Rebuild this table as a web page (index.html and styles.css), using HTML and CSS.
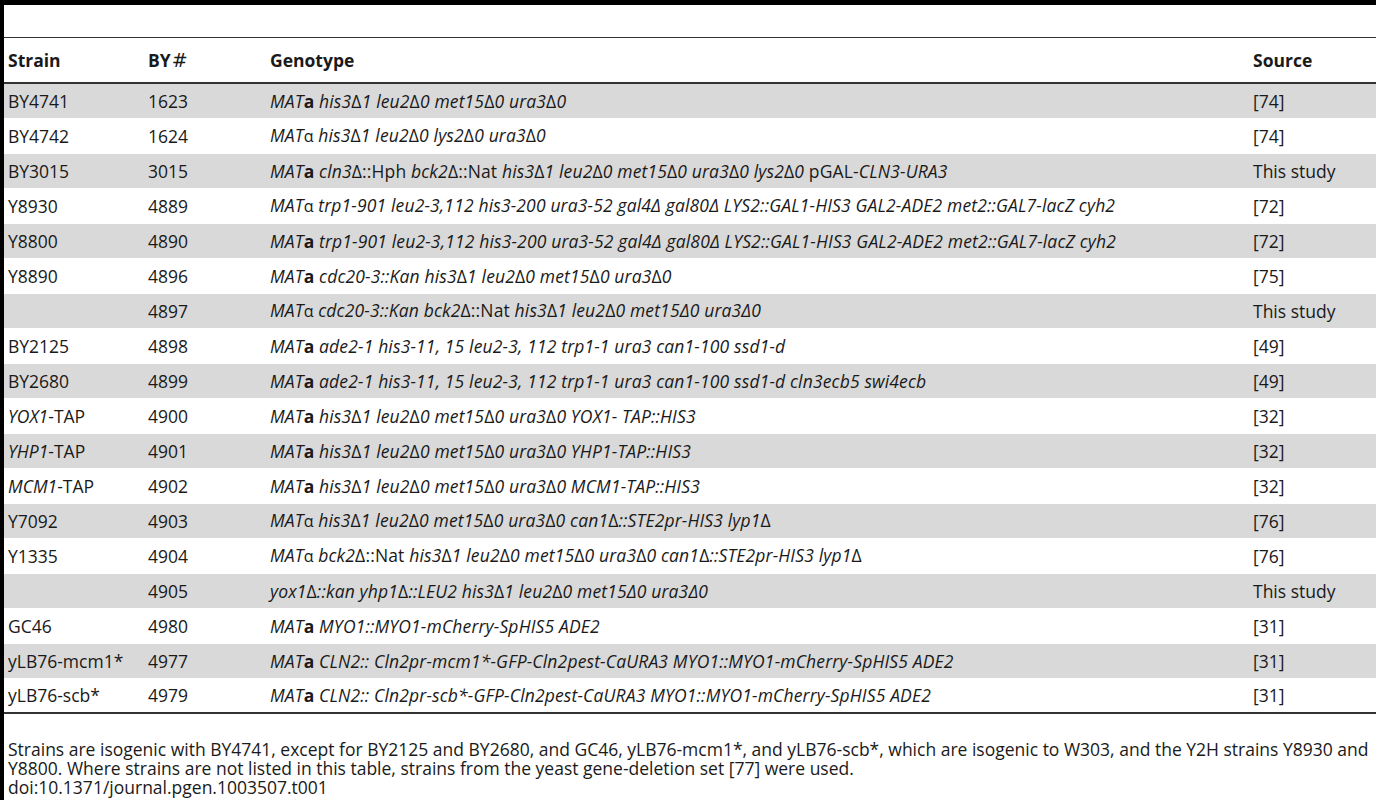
FILE: index.html
```html
<!DOCTYPE html>
<html lang="en">
<head>
<meta charset="utf-8">
<title>Strains</title>
<link rel="stylesheet" href="styles.css">
</head>
<body>
<div class="page">
  <div class="topbar"></div>
  <div class="gap"></div>
  <table class="strains">
    <colgroup>
      <col class="c-strain"><col class="c-by"><col class="c-geno"><col class="c-src">
    </colgroup>
    <thead>
      <tr><th>Strain</th><th>BY<span class="hash">#</span></th><th>Genotype</th><th>Source</th></tr>
    </thead>
    <tbody>
      <tr class="g"><td>BY4741</td><td>1623</td><td class="geno"><i>MAT<b>a</b> his3<span class="u">Δ</span>1 leu2<span class="u">Δ</span>0 met15<span class="u">Δ</span>0 ura3<span class="u">Δ</span>0</i></td><td>[74]</td></tr>
      <tr><td>BY4742</td><td>1624</td><td class="geno"><i>MAT<span class="u al">α</span> his3<span class="u">Δ</span>1 leu2<span class="u">Δ</span>0 lys2<span class="u">Δ</span>0 ura3<span class="u">Δ</span>0</i></td><td>[74]</td></tr>
      <tr class="g"><td>BY3015</td><td>3015</td><td class="geno"><i>MAT<b>a</b> cln3<span class="u">Δ</span></i>::Hph <i>bck2<span class="u">Δ</span></i>::Nat <i>his3<span class="u">Δ</span>1 leu2<span class="u">Δ</span>0 met15<span class="u">Δ</span>0 ura3<span class="u">Δ</span>0 lys2<span class="u">Δ</span>0</i> pGAL-<i>CLN3-URA3</i></td><td>This study</td></tr>
      <tr><td>Y8930</td><td>4889</td><td class="geno"><i>MAT<span class="u al">α</span> trp1-901 leu2-3,112 his3-200 ura3-52 gal4Δ gal80Δ LYS2::GAL1-HIS3 GAL2-ADE2 met2::GAL7-lacZ cyh2</i></td><td>[72]</td></tr>
      <tr class="g"><td>Y8800</td><td>4890</td><td class="geno"><i>MAT<b>a</b> trp1-901 leu2-3,112 his3-200 ura3-52 gal4Δ gal80Δ LYS2::GAL1-HIS3 GAL2-ADE2 met2::GAL7-lacZ cyh2</i></td><td>[72]</td></tr>
      <tr><td>Y8890</td><td>4896</td><td class="geno"><i>MAT<b>a</b> cdc20-3::Kan his3<span class="u">Δ</span>1 leu2<span class="u">Δ</span>0 met15<span class="u">Δ</span>0 ura3<span class="u">Δ</span>0</i></td><td>[75]</td></tr>
      <tr class="g"><td></td><td>4897</td><td class="geno"><i>MAT<span class="u al">α</span> cdc20-3::Kan bck2<span class="u">Δ</span></i>::Nat <i>his3<span class="u">Δ</span>1 leu2<span class="u">Δ</span>0 met15Δ0 ura3Δ0</i></td><td>This study</td></tr>
      <tr><td>BY2125</td><td>4898</td><td class="geno"><i>MAT<b>a</b> ade2-1 his3-11, 15 leu2-3, 112 trp1-1 ura3 can1-100 ssd1-d</i></td><td>[49]</td></tr>
      <tr class="g"><td>BY2680</td><td>4899</td><td class="geno"><i>MAT<b>a</b> ade2-1 his3-11, 15 leu2-3, 112 trp1-1 ura3 can1-100 ssd1-d cln3ecb5 swi4ecb</i></td><td>[49]</td></tr>
      <tr><td><i>YOX1</i>-TAP</td><td>4900</td><td class="geno"><i>MAT<b>a</b> his3<span class="u">Δ</span>1 leu2<span class="u">Δ</span>0 met15<span class="u">Δ</span>0 ura3<span class="u">Δ</span>0 YOX1- TAP::HIS3</i></td><td>[32]</td></tr>
      <tr class="g"><td><i>YHP1</i>-TAP</td><td>4901</td><td class="geno"><i>MAT<b>a</b> his3<span class="u">Δ</span>1 leu2<span class="u">Δ</span>0 met15<span class="u">Δ</span>0 ura3<span class="u">Δ</span>0 YHP1-TAP::HIS3</i></td><td>[32]</td></tr>
      <tr><td><i>MCM1</i>-TAP</td><td>4902</td><td class="geno"><i>MAT<b>a</b> his3<span class="u">Δ</span>1 leu2<span class="u">Δ</span>0 met15<span class="u">Δ</span>0 ura3<span class="u">Δ</span>0 MCM1-TAP::HIS3</i></td><td>[32]</td></tr>
      <tr class="g"><td>Y7092</td><td>4903</td><td class="geno"><i>MAT<span class="u al">α</span> his3<span class="u">Δ</span>1 leu2<span class="u">Δ</span>0 met15<span class="u">Δ</span>0 ura3<span class="u">Δ</span>0 can1<span class="u">Δ</span>::STE2pr-HIS3 lyp1<span class="u">Δ</span></i></td><td>[76]</td></tr>
      <tr><td>Y1335</td><td>4904</td><td class="geno"><i>MAT<span class="u al">α</span> bck2<span class="u">Δ</span></i>::Nat <i>his3<span class="u">Δ</span>1 leu2<span class="u">Δ</span>0 met15<span class="u">Δ</span>0 ura3<span class="u">Δ</span>0 can1<span class="u">Δ</span>::STE2pr-HIS3 lyp1<span class="u">Δ</span></i></td><td>[76]</td></tr>
      <tr class="g"><td></td><td>4905</td><td class="geno"><i>yox1<span class="u">Δ</span>::kan yhp1<span class="u">Δ</span>::LEU2 his3<span class="u">Δ</span>1 leu2<span class="u">Δ</span>0 met15Δ0 ura3Δ0</i></td><td>This study</td></tr>
      <tr><td>GC46</td><td>4980</td><td class="geno"><i>MAT<b>a</b> MYO1::MYO1-mCherry-SpHIS5 ADE2</i></td><td>[31]</td></tr>
      <tr class="g"><td>yLB76-mcm1*</td><td>4977</td><td class="geno"><i>MAT<b>a</b> CLN2:: Cln2pr-mcm1*-GFP-Cln2pest-CaURA3 MYO1::MYO1-mCherry-SpHIS5 ADE2</i></td><td>[31]</td></tr>
      <tr><td>yLB76-scb*</td><td>4979</td><td class="geno"><i>MAT<b>a</b> CLN2:: Cln2pr-scb*-GFP-Cln2pest-CaURA3 MYO1::MYO1-mCherry-SpHIS5 ADE2</i></td><td>[31]</td></tr>
    </tbody>
  </table>
  <div class="notes">
    <p>Strains are isogenic with BY4741, except for BY2125 and BY2680, and GC46, yLB76-mcm1*, and yLB76-scb*, which are isogenic to W303, and the Y2H strains Y8930 and<br>Y8800. Where strains are not listed in this table, strains from the yeast gene-deletion set [77] were used.</p>
    <p>doi:10.1371/journal.pgen.1003507.t001</p>
  </div>
</div>
</body>
</html>
```

FILE: styles.css
```css
html, body {
  margin: 0;
  padding: 0;
  background: #fff;
}

body {
  font-family: "Open Sans", "Liberation Sans", sans-serif;
  font-size: 17.5px;
  color: #1a1a1a;
}

.page {
  border-left: 4px solid #000;
  min-height: 800px;
  box-sizing: border-box;
  overflow: hidden;
}

.topbar {
  height: 5px;
  background: #000;
}

.gap {
  height: 32px;
}

.strains {
  width: 100%;
  border-collapse: collapse;
  border-top: 1px solid #333;
  border-bottom: 2px solid #333;
  table-layout: fixed;
}

.c-strain { width: 140px; }
.c-by { width: 122px; }
.c-src { width: 127px; }

.strains th {
  text-align: left;
  font-weight: 700;
  height: 44px;
  padding: 0 0 0 4px;
  border-bottom: 2px solid #333;
  vertical-align: middle;
}

.hash {
  font-weight: 400;
  font-family: "DejaVu Sans", sans-serif;
  font-size: 19px;
  margin-left: 1px;
}

.strains td {
  height: 35px;
  padding: 0 0 0 4px;
  box-sizing: border-box;
  white-space: nowrap;
  vertical-align: middle;
  line-height: 20px;
}

.strains td.geno {
  letter-spacing: 0.15px;
}

.strains tr.g td {
  background: #d9d9d9;
  border-top: 1px solid #fff;
  border-bottom: 1px solid #fff;
}

.strains i {
  font-style: italic;
}

.strains b {
  font-weight: 700;
  font-style: normal;
}

.u {
  font-style: normal;
}

.al {
  font-size: 16px;
}

.notes {
  padding: 26px 0 0 4px;
  line-height: 19px;
  white-space: nowrap;
}

.notes p {
  margin: 0;
}
```
